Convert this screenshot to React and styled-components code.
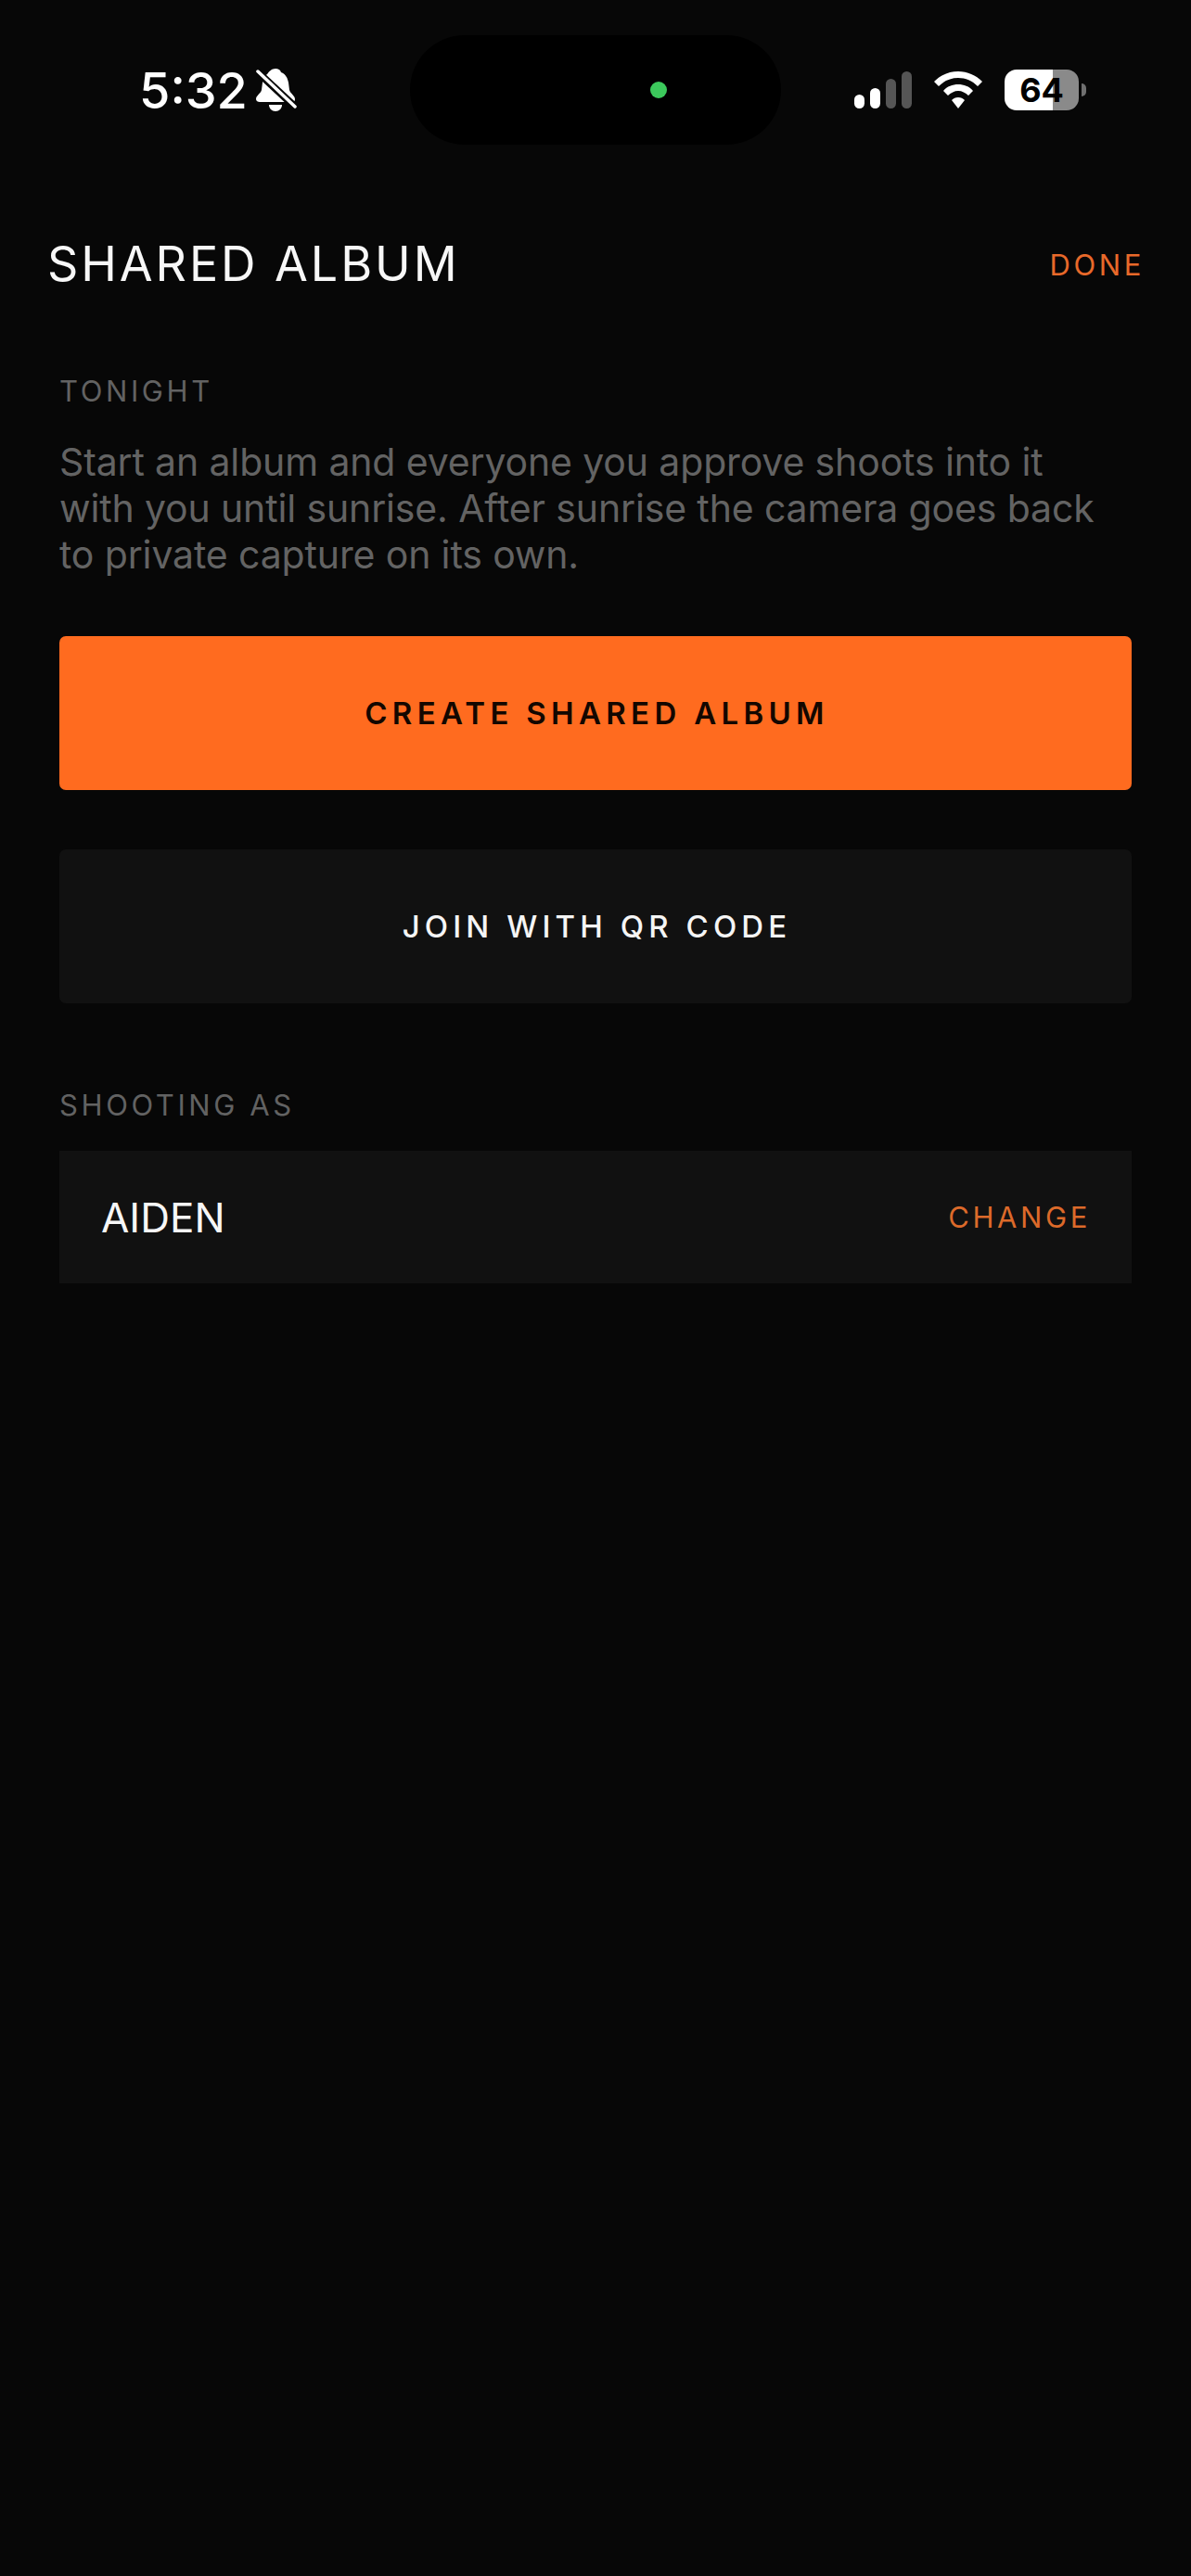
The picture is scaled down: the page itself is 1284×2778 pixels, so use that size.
import React from 'react';
import styled, { createGlobalStyle } from 'styled-components';

const GlobalStyle = createGlobalStyle`
    html, body {
        margin: 0;
        padding: 0;
        background: #070707;
    }
    * {
        box-sizing: border-box;
    }
`

const Screen = styled.div`
    width: 1284px;
    height: 2778px;
    background: #070707;
    color: #f5f5f5;
    font-family: Inter, "Noto Sans", sans-serif;
    overflow: hidden;
`

const StatusBar = styled.div`
    display: flex;
    align-items: center;
    height: 118px;
    margin-top: 38px;
`

const StatusLeft = styled.div`
    width: 442px;
    display: flex;
    align-items: center;
    padding-left: 150px;
    gap: 9px;
`

const Time = styled.span`
    font-size: 54px;
    font-weight: 500;
    letter-spacing: 0;
    color: #fff;
`

const Island = styled.div`
    width: 400px;
    height: 118px;
    border-radius: 59px;
    background: #000;
    display: flex;
    align-items: center;
    padding-left: 259px;
`

const CameraDot = styled.div`
    width: 18px;
    height: 18px;
    border-radius: 50%;
    background: #3cc95c;
`

const StatusRight = styled.div`
    width: 442px;
    display: flex;
    align-items: center;
    padding-left: 79px;
`

const SignalBars = styled.div`
    display: flex;
    align-items: flex-end;
    gap: 6px;
    height: 40px;
`

const SignalBar = styled.div`
    width: 11px;
    height: ${props => props.$height}px;
    border-radius: 6px;
    background: ${props => props.$on ? '#fff' : '#555'};
`

const WifiIcon = styled.svg`
    width: 52px;
    height: 40px;
    margin-left: 24px;
`

const Battery = styled.div`
    width: 80px;
    height: 44px;
    margin-left: 24px;
    border-radius: 13px;
    background: linear-gradient(90deg, #fff 0, #fff 52px, #8a8a8a 52px, #8a8a8a 100%);
    color: #000;
    font-size: 36px;
    font-weight: 700;
    display: flex;
    align-items: center;
    justify-content: center;
`

const BatteryNub = styled.div`
    width: 5px;
    height: 14px;
    margin-left: 3px;
    border-radius: 0 5px 5px 0;
    background: #6f6f6f;
`

const Header = styled.div`
    display: flex;
    align-items: center;
    justify-content: space-between;
    padding: 0 50px 0 51px;
    margin-top: 99px;
    height: 60px;
`

const Title = styled.h1`
    margin: 0;
    font-size: 52px;
    font-weight: 400;
    letter-spacing: 2.9px;
    line-height: 60px;
    color: #f7f7f7;
`

const ActionLink = styled.span`
    color: ${props => props.$dim ? '#dc6a2a' : '#e8692a'};
    font-size: 31px;
    font-weight: 400;
    letter-spacing: 3.6px;
`

const Content = styled.div`
    padding: 0 64px;
`

const SectionLabel = styled.div`
    color: #626262;
    font-size: 31px;
    font-weight: 400;
    letter-spacing: 3.6px;
    line-height: 36px;
    margin-top: ${props => props.$top}px;
`

const Description = styled.p`
    margin: 33px 0 0;
    color: #636363;
    font-size: 41px;
    font-weight: 400;
    letter-spacing: -0.14px;
    line-height: 50px;
`

const Button = styled.div`
    height: 166px;
    margin-top: ${props => props.$top}px;
    padding-left: 3px;
    border-radius: 7px;
    background: ${props => props.$primary ? '#ff6b1f' : '#111'};
    color: ${props => props.$primary ? '#130700' : '#f5f5f5'};
    font-size: 33px;
    font-weight: ${props => props.$primary ? 600 : 500};
    letter-spacing: ${props => props.$primary ? 5.3 : 5.1}px;
    display: flex;
    align-items: center;
    justify-content: center;
`

const IdentityRow = styled.div`
    height: 143px;
    margin-top: 31px;
    padding: 0 44px 0 45px;
    background: #111;
    display: flex;
    align-items: center;
    justify-content: space-between;
`

const IdentityName = styled.span`
    font-size: 44px;
    font-weight: 400;
    color: #f7f7f7;
`

export default function App() {
    return (
        <>
        <GlobalStyle />
        <Screen>
            <StatusBar>
                <StatusLeft>
                    <Time>5:32</Time>
                    <svg width="44" height="46" viewBox="0 0 44 46">
                        <path d="M21 0c3 0 5 1 6 4 5 2 7 6 8 11l1 8c1 4 6 6 6 10 0 2-1 3-3 3H4c-2 0-4-1-4-3 0-4 5-6 6-10l1-8c0-4 2-7 5-9 2-3 5-6 9-6z" fill="#fff" />
                        <path d="M14 39h14c0 4-3 7-7 7s-7-3-7-7z" fill="#fff" />
                        <path d="M0 2l44 41" stroke="#070707" strokeWidth="8" />
                        <path d="M2 3l40 38" stroke="#fff" strokeWidth="3.5" strokeLinecap="round" />
                    </svg>
                </StatusLeft>
                <Island>
                    <CameraDot />
                </Island>
                <StatusRight>
                    <SignalBars>
                        <SignalBar $height={15} $on />
                        <SignalBar $height={22} $on />
                        <SignalBar $height={32} />
                        <SignalBar $height={40} />
                    </SignalBars>
                    <WifiIcon viewBox="0 0 52 40">
                        <path d="M26 0C16 0 7 4 0 11l5 5C11 10 18 7 26 7s15 3 21 9l5-5C45 4 36 0 26 0z" fill="#fff" />
                        <path d="M26 14c-6 0-12 2-16 7l5 5c3-3 7-5 11-5s8 2 11 5l5-5c-4-5-10-7-16-7z" fill="#fff" />
                        <path d="M26 28c-3 0-5 1-7 3l7 9 7-9c-2-2-4-3-7-3z" fill="#fff" />
                    </WifiIcon>
                    <Battery>64</Battery>
                    <BatteryNub />
                </StatusRight>
            </StatusBar>

            <Header>
                <Title>SHARED ALBUM</Title>
                <ActionLink>DONE</ActionLink>
            </Header>

            <Content>
                <SectionLabel $top={89}>TONIGHT</SectionLabel>
                <Description>
                    Start an album and everyone you approve shoots into it<br />
                    with you until sunrise. After sunrise the camera goes back<br />
                    to private capture on its own.
                </Description>
                <Button $primary $top={63}>CREATE SHARED ALBUM</Button>
                <Button $top={64}>JOIN WITH QR CODE</Button>
                <SectionLabel $top={92}>SHOOTING AS</SectionLabel>
                <IdentityRow>
                    <IdentityName>AIDEN</IdentityName>
                    <ActionLink $dim>CHANGE</ActionLink>
                </IdentityRow>
            </Content>
        </Screen>
        </>
    )
}
